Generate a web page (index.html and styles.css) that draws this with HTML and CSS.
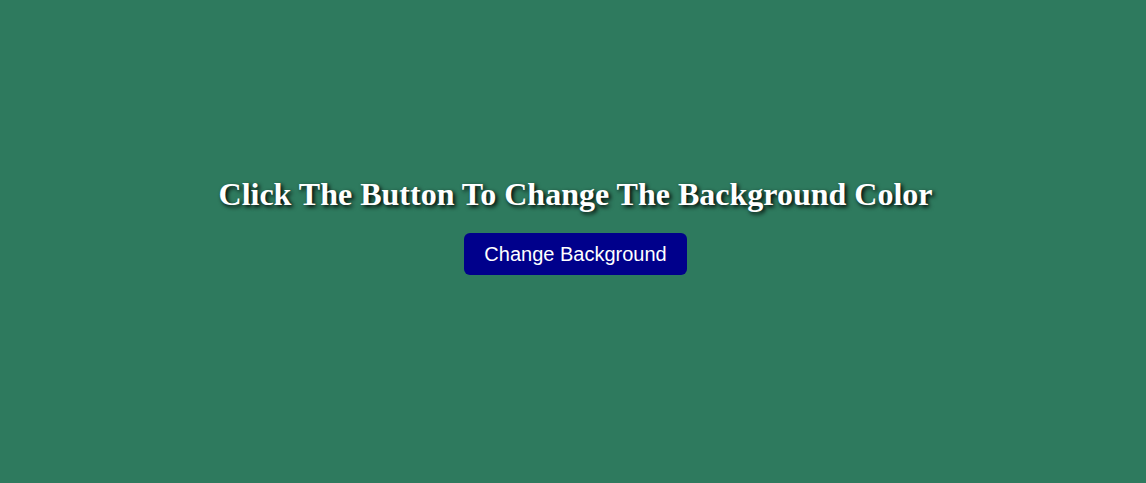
FILE: index.html
```html
<!DOCTYPE html>
<html>
<head>
<meta charset="utf-8">
<link rel="stylesheet" href="styles.css">
</head>
<body>
<main class="page">
  <h1 class="title">Click The Button To Change The Background Color</h1>
  <button class="change-btn">Change Background</button>
</main>
</body>
</html>
```
FILE: styles.css
```css
html, body {
  margin: 0;
  padding: 0;
}
body {
  background: #2e7a5e;
  font-family: "Liberation Serif", "Times New Roman", serif;
}
.page {
  height: 483px;
  box-sizing: border-box;
  padding: 0 0 32px 5px;
  display: flex;
  flex-direction: column;
  align-items: center;
  justify-content: center;
}
.title {
  margin: 0 0 20px;
  font-size: 32px;
  font-weight: bold;
  color: #ffffff;
  text-shadow: 2px 2px 4px #000000;
}
.change-btn {
  background: #00008b;
  color: #ffffff;
  border: none;
  border-radius: 6px;
  padding: 10px 20px;
  line-height: 22px;
  font-family: "Liberation Sans", Arial, sans-serif;
  font-size: 20px;
  cursor: pointer;
}
```
